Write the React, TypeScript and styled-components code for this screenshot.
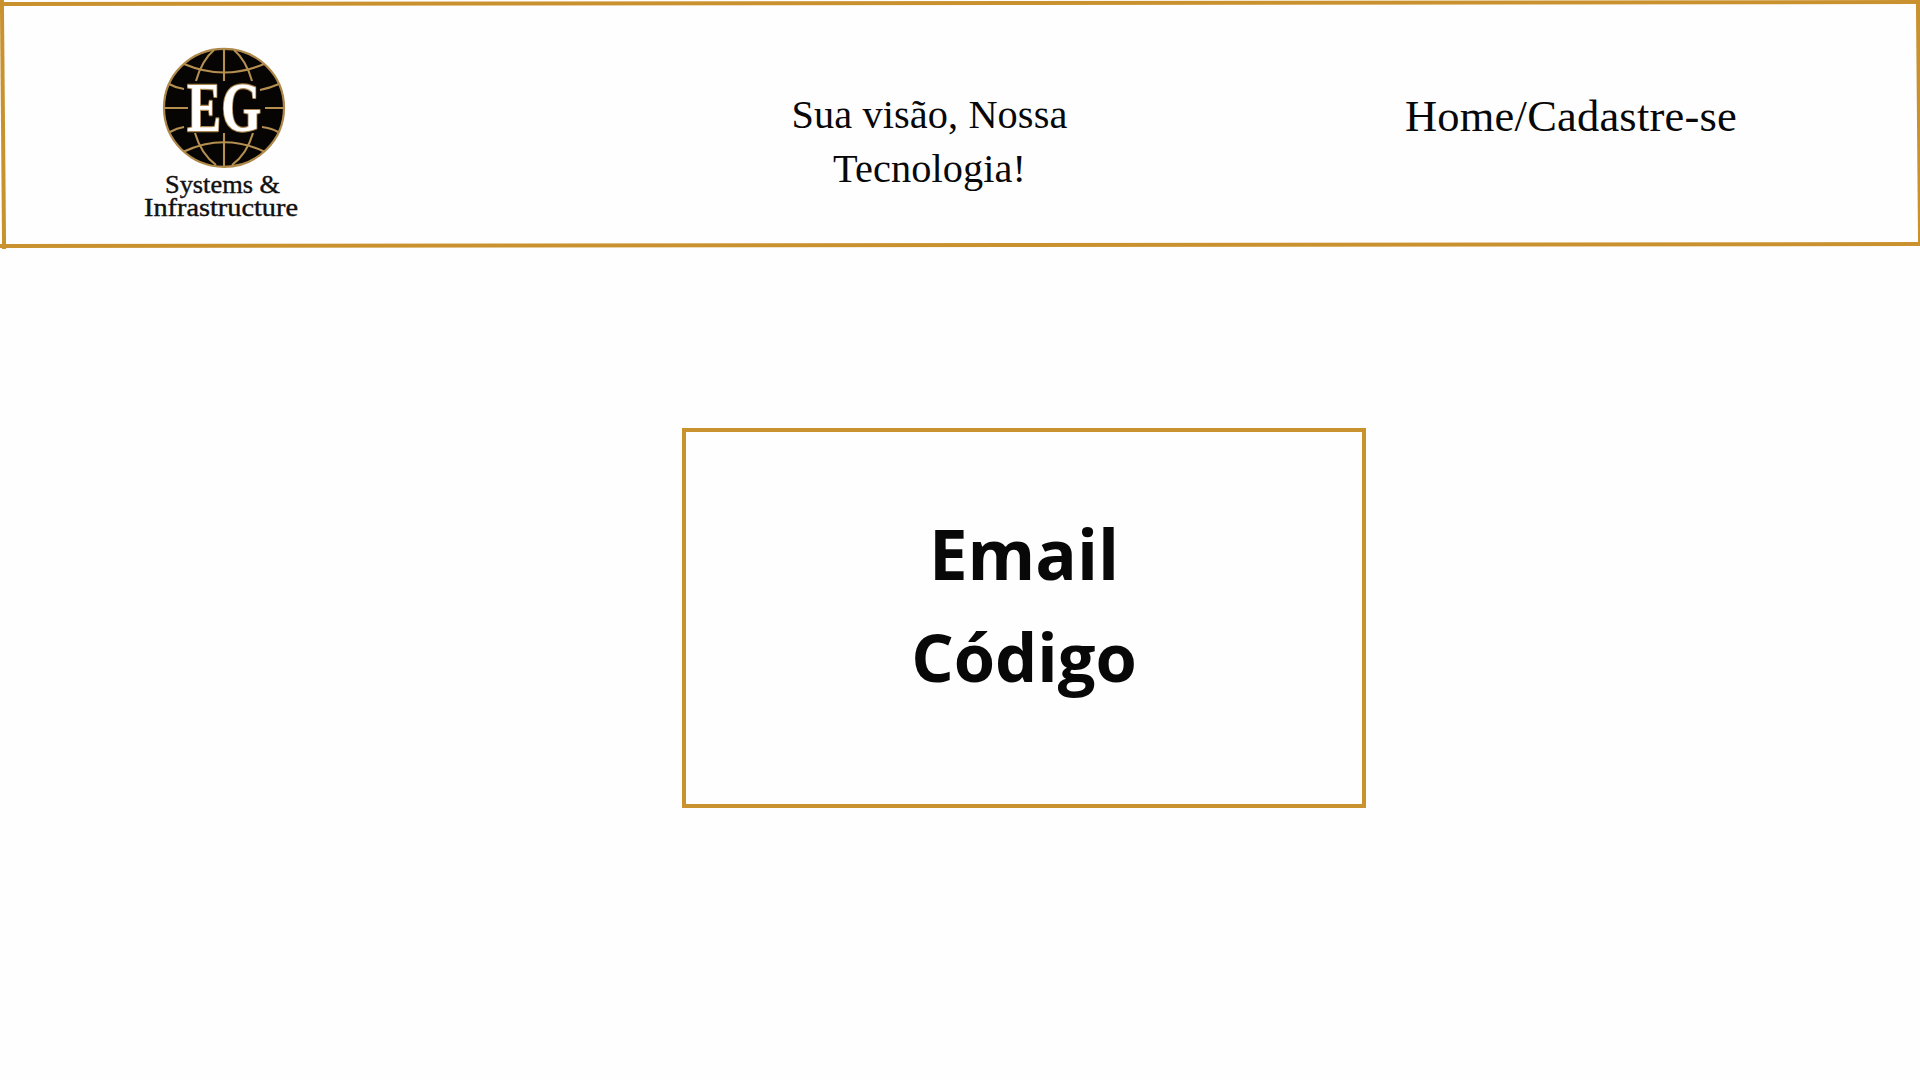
import React from "react";
import styled, { createGlobalStyle } from "styled-components";

const gold = "#c9922e";
const ink = "#080808";

const GlobalStyle = createGlobalStyle`
  *, *::before, *::after { box-sizing: border-box; }
  body { margin: 0; background: #fefefe; overflow: hidden; }
`;

const Page = styled.div`
  width: 1920px;
  height: 1080px;
  overflow: hidden;
  background: #fefefe;
  color: ${ink};
`;

const Header = styled.header`
  position: relative;
  display: grid;
  grid-template-columns: 700px 459px 1fr;
  height: 249px;
`;

const Edge = styled.span<{ $side: "top" | "bottom" | "left" | "right" }>`
  position: absolute;
  background: ${gold};
  ${({ $side }) =>
    ({
      top: "left: 2px; right: 0; top: 1px; height: 4px; transform: skewY(-0.06deg);",
      bottom: "left: 0; right: 0; top: 243px; height: 4px; transform: skewY(-0.06deg);",
      left: "left: 1px; top: 0; width: 4px; height: 248.5px; transform: skewX(0.5deg);",
      right: "left: 1917px; top: 0; width: 4px; height: 246px; transform: skewX(0.5deg);",
    })[$side]}
`;

const Brand = styled.div`
  padding: 40px 0 0 134px;
`;

const Logo = styled.svg`
  display: block;
  width: 180px;
  height: 190px;
  font-family: "Liberation Serif", "Times New Roman", serif;
`;

const Slogan = styled.p`
  margin: 0;
  padding-top: 88px;
  text-align: center;
  font: 40.3px/54px "Liberation Serif", "Times New Roman", serif;
  letter-spacing: 0.1px;
`;

const Nav = styled.nav`
  padding: 90px 0 0 246px;
  font: 44.5px/52px "Liberation Serif", "Times New Roman", serif;
  letter-spacing: 0.2px;
  white-space: nowrap;
`;

const NavLink = styled.a`
  color: inherit;
  text-decoration: none;
`;

const Main = styled.main`
  display: flex;
  padding: 179px 0 0 682px;
`;

const Card = styled.section`
  display: flex;
  flex-direction: column;
  align-items: center;
  width: 684px;
  height: 380px;
  padding-top: 70px;
  border: 4px solid ${gold};
`;

const Field = styled.label<{ $size: number }>`
  font: 700 ${({ $size }) => $size}px/103px "Open Sans", "Noto Sans", sans-serif;
`;

const GlobeLogo = () => (
  <Logo viewBox="134 40 180 190" role="img">
    <ellipse cx="224" cy="107.8" rx="60" ry="59" fill="#060504" stroke="#ae8849" strokeWidth="2.200" />
    <g fill="none" stroke="#b48f50" strokeWidth="2.100">
      <path d="M224 49V81M224 133V166" />
      <path d="M165 108H188M265 108H284" />
      <path d="M184 64Q224 81 264 64" />
      <path d="M184 151.500Q224 133 264 151.500" />
      <path d="M214 50Q202 60 196 81M234 50Q246 60 252 81" />
      <path d="M195 133Q201 154 216 165M253 133Q247 154 232 165" />
      <path d="M169 84Q176 88 184 89M279 84Q270 88 260 90" />
      <path d="M170 132Q177 128 184 127M278 132Q271 128 262 127" />
    </g>
    <text
      x="187"
      y="130.700"
      textLength="74"
      lengthAdjust="spacingAndGlyphs"
      fontSize="69"
      fontWeight="700"
      fill="#fff"
      stroke="#a88450"
      strokeWidth="2.400"
      paintOrder="stroke"
      strokeLinejoin="round"
    >
      EG
    </text>
    <g fontSize="24.500" fill="#111" stroke="#111" strokeWidth="0.400">
      <text x="165" y="192.500" textLength="115" lengthAdjust="spacingAndGlyphs">Systems &amp;</text>
      <text x="144" y="215.800" textLength="154" lengthAdjust="spacingAndGlyphs">Infrastructure</text>
    </g>
  </Logo>
);

export default function App() {
  return (
    <Page>
      <GlobalStyle />
      <Header>
        <Brand>
          <GlobeLogo />
        </Brand>
        <Slogan>
          Sua visão, Nossa
          <br />
          Tecnologia!
        </Slogan>
        <Nav>
          <NavLink>Home</NavLink>/<NavLink>Cadastre-se</NavLink>
        </Nav>
        <Edge $side="top" />
        <Edge $side="bottom" />
        <Edge $side="left" />
        <Edge $side="right" />
      </Header>
      <Main>
        <Card>
          <Field $size={69}>Email</Field>
          <Field $size={66.8}>Código</Field>
        </Card>
      </Main>
    </Page>
  );
}
